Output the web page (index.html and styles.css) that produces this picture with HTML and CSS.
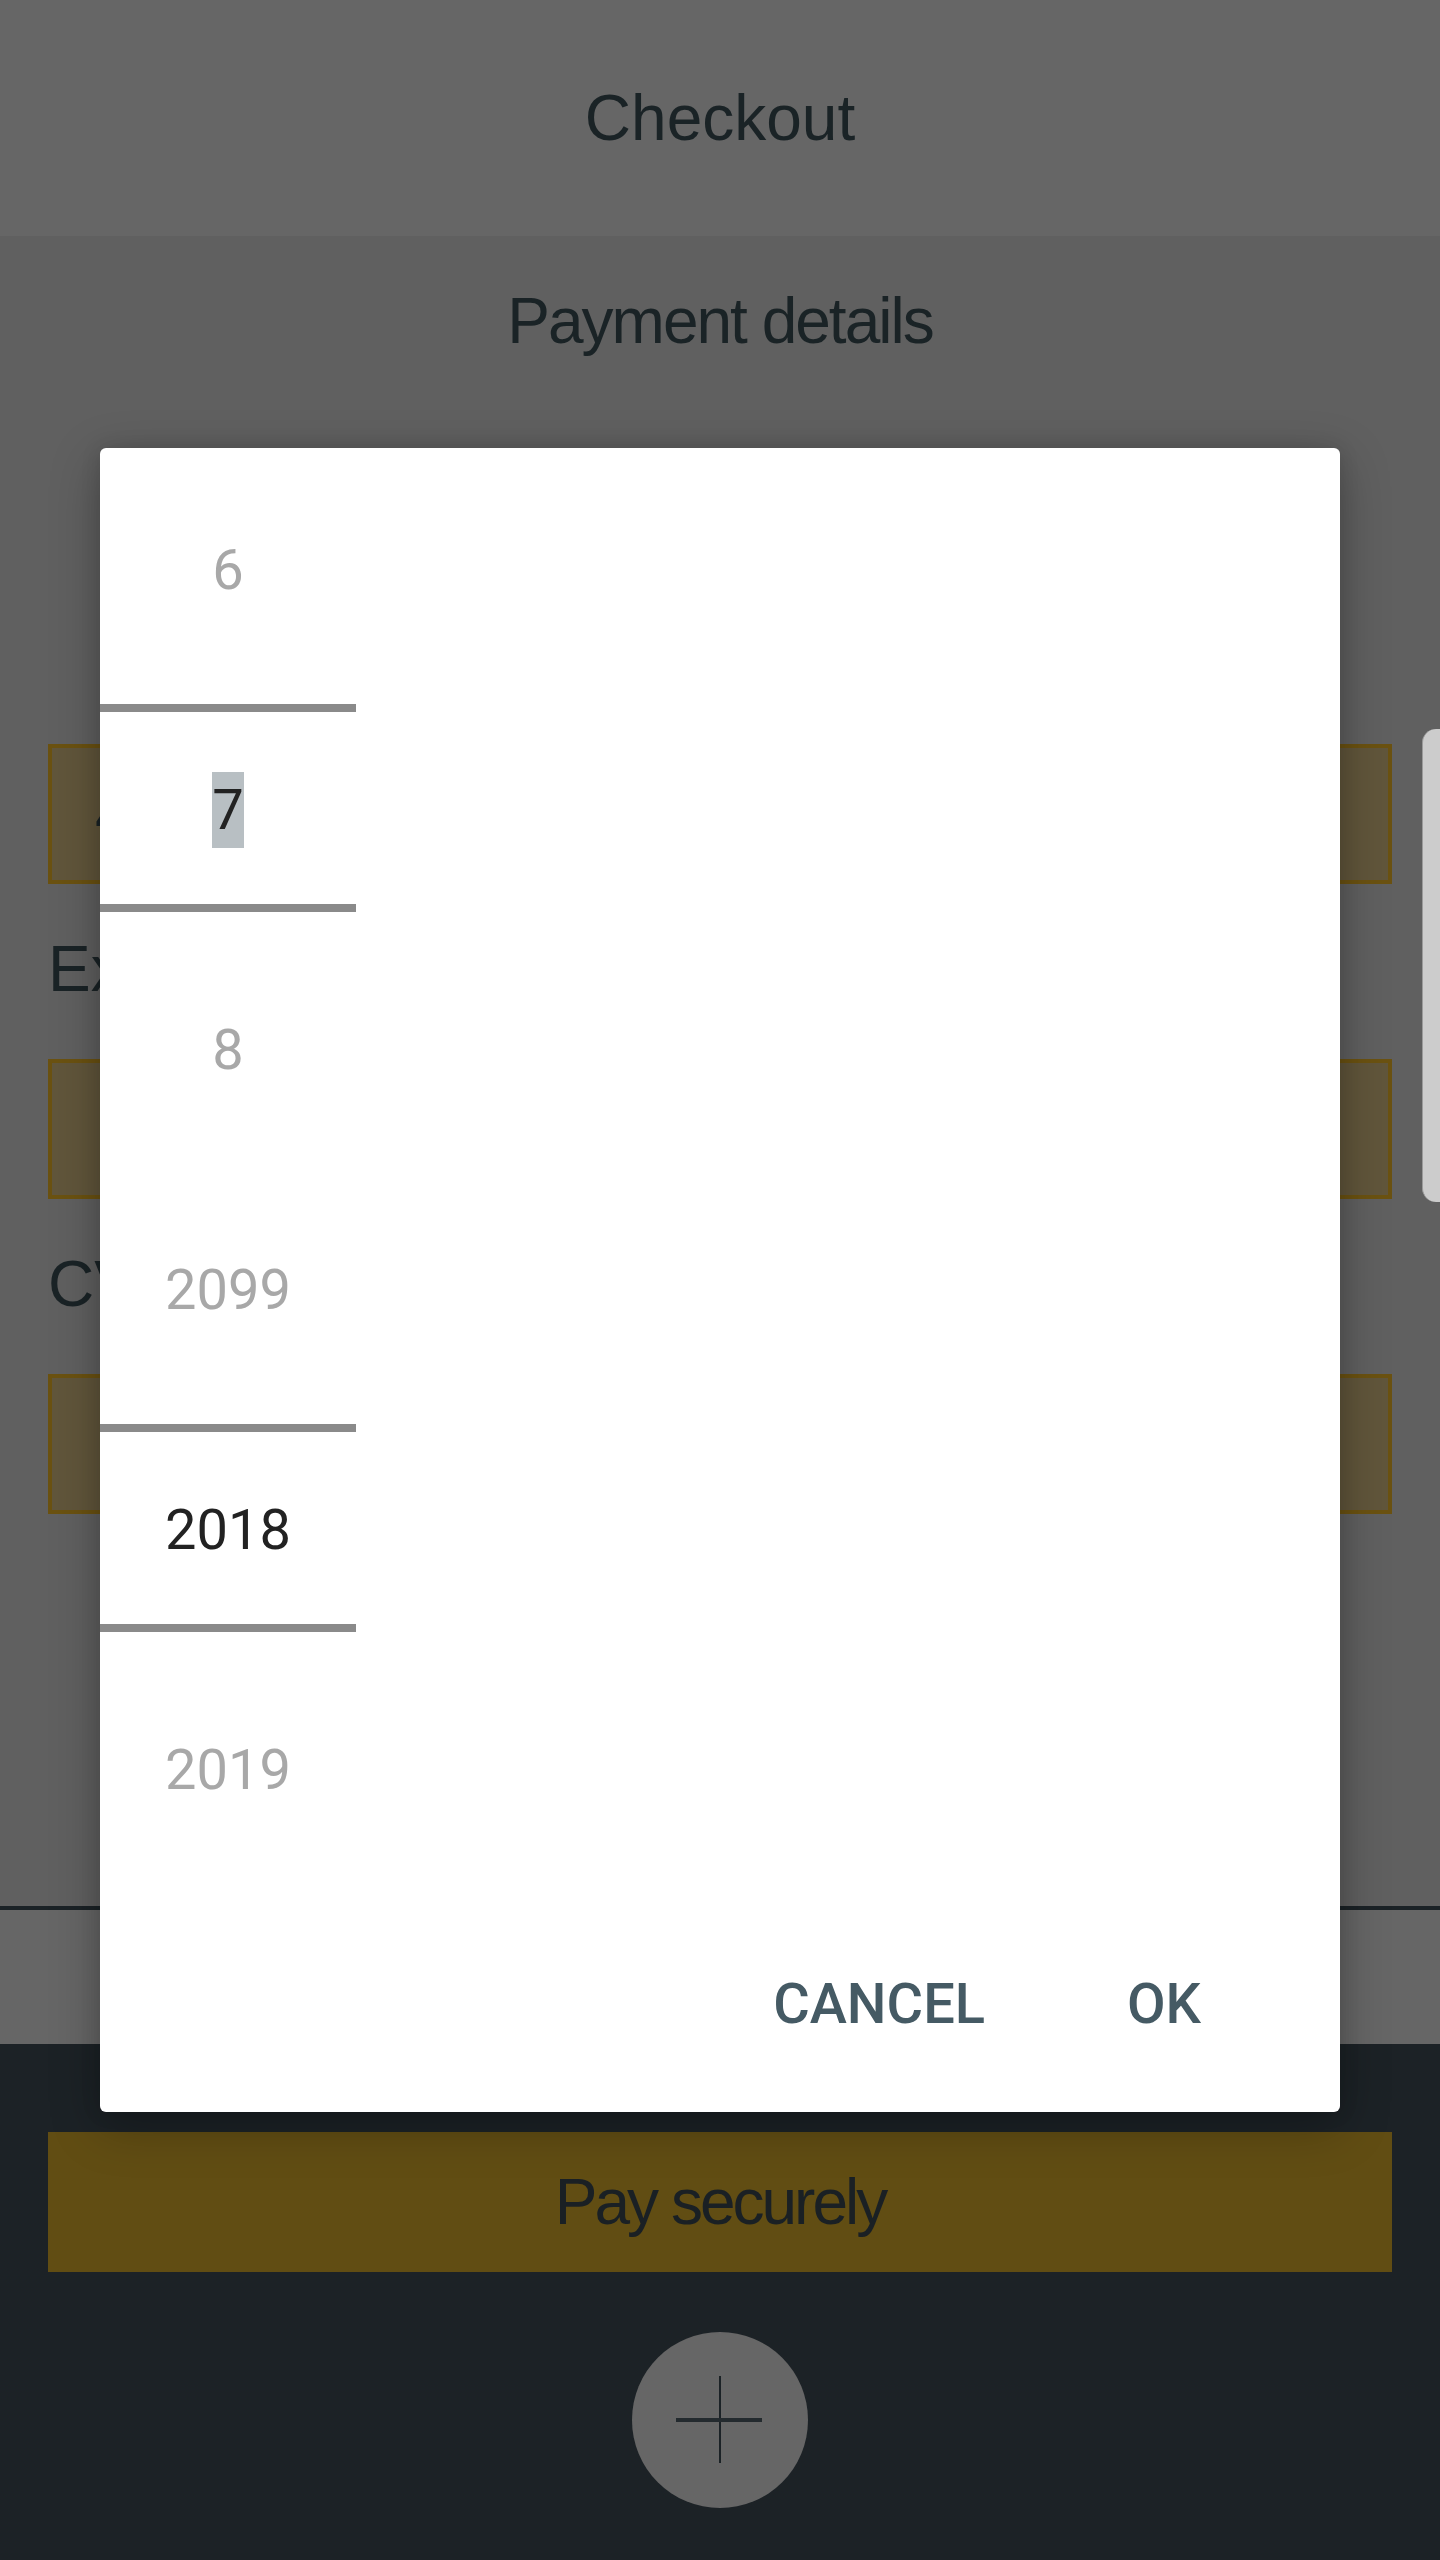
FILE: index.html
```html
<!DOCTYPE html>
<html lang="en">
<head>
<meta charset="utf-8">
<title>Checkout</title>
<link rel="stylesheet" href="styles.css">
</head>
<body>
<div class="screen">
  <header class="appbar"><h1 class="appbar-title">Checkout</h1></header>
  <main class="content">
    <h2 class="section-title">Payment details</h2>
    <form class="form">
      <label class="label label-center">Card number</label>
      <div class="field">4242 4242 4242 4242</div>
      <label class="label">Expiry date</label>
      <div class="field"></div>
      <label class="label">CVV</label>
      <div class="field"></div>
    </form>
  </main>
  <div class="summary"></div>
  <footer class="footer">
    <button class="pay" type="button">Pay securely</button>
    <button class="fab" type="button" aria-label="Add">
      <svg width="176" height="176" viewBox="0 0 176 176">
        <rect x="87" y="44" width="2" height="87" fill="#1b2226"/>
        <rect x="44" y="86" width="86" height="4" fill="#232a2e"/>
      </svg>
    </button>
  </footer>
  <div class="edge-handle"></div>

  <div class="dialog" role="dialog">
    <div class="picker-col">
      <div class="picker">
        <div class="picker-item">6</div>
        <div class="picker-item selected"><span class="sel">7</span></div>
        <div class="picker-item">8</div>
      </div>
      <div class="picker">
        <div class="picker-item">2099</div>
        <div class="picker-item selected">2018</div>
        <div class="picker-item">2019</div>
      </div>
    </div>
    <div class="actions">
      <button class="action" type="button">CANCEL</button>
      <button class="action" type="button">OK</button>
    </div>
  </div>
</div>
</body>
</html>
```

FILE: styles.css
```css
html, body {
  margin: 0;
  padding: 0;
}

body {
  background: #1c2226;
  font-family: "Liberation Sans", Arial, sans-serif;
}

.screen {
  position: relative;
  width: 1440px;
  height: 2560px;
  overflow: hidden;
}

.appbar {
  height: 236px;
  background: #666666;
  display: flex;
  justify-content: center;
}

.appbar-title {
  margin: 0;
  font-size: 64px;
  font-weight: 400;
  line-height: 236px;
  color: #1a2326;
}

.content {
  height: 1670px;
  box-sizing: border-box;
  background: #606060;
}

.section-title {
  margin: 0;
  text-align: center;
  font-size: 64px;
  font-weight: 400;
  line-height: 170px;
  letter-spacing: -2px;
  color: #1a2326;
}

.form {
  padding: 163px 48px 0 48px;
  display: flex;
  flex-direction: column;
}

.label {
  display: block;
  margin: 35px 0 40px;
  font-size: 64px;
  line-height: 100px;
  color: #1a2326;
}

.label-center {
  text-align: center;
}

.field {
  height: 140px;
  box-sizing: border-box;
  border: 4px solid #6b5211;
  background: #61563b;
  padding-left: 43px;
  font-size: 64px;
  line-height: 132px;
  color: #1a2326;
}

.summary {
  height: 134px;
  background: #666666;
  border-top: 4px solid #1b2226;
}

.footer {
  height: 516px;
  box-sizing: border-box;
  padding: 88px 48px 0;
  background: #1c2226;
  display: flex;
  flex-direction: column;
  align-items: center;
}

.pay {
  width: 100%;
  height: 140px;
  border: 0;
  background: #614d13;
  font-family: "Liberation Sans", Arial, sans-serif;
  font-size: 64px;
  letter-spacing: -3px;
  color: #1a2024;
  padding: 0;
}

.fab {
  margin-top: 60px;
  width: 176px;
  height: 176px;
  border-radius: 50%;
  border: 0;
  padding: 0;
  background: #666666;
  display: block;
}

.fab svg {
  display: block;
}

.edge-handle {
  position: absolute;
  right: 0;
  top: 729px;
  width: 17px;
  height: 473px;
  background: #cccccc;
  border-left: 1px solid #9a9a9a;
  border-radius: 14px 0 0 14px;
}

.dialog {
  position: absolute;
  left: 100px;
  top: 448px;
  width: 1240px;
  height: 1664px;
  background: #ffffff;
  border-radius: 6px;
  box-shadow: 0 14px 50px rgba(0, 0, 0, 0.28), 0 0 20px rgba(0, 0, 0, 0.12);
  display: flex;
  flex-direction: column;
}

.picker-col {
  width: 256px;
  padding-top: 2px;
}

.picker {
  position: relative;
  height: 720px;
}

.picker::after {
  content: "";
  position: absolute;
  left: 0;
  right: 0;
  top: 254px;
  height: 208px;
  box-sizing: border-box;
  border-top: 8px solid #8a8a8a;
  border-bottom: 8px solid #8a8a8a;
}

.picker-item {
  height: 240px;
  line-height: 240px;
  text-align: center;
  font-family: Roboto, "Liberation Sans", sans-serif;
  font-size: 56px;
  color: #a8a8a8;
}

.picker-item.selected {
  color: #222222;
}

.sel {
  display: inline-block;
  height: 76px;
  line-height: 76px;
  background: #b8bfc3;
}

.actions {
  margin-top: auto;
  display: flex;
  justify-content: flex-end;
  gap: 142px;
  padding: 0 139px 68px 0;
}

.action {
  border: 0;
  background: none;
  padding: 0;
  font-family: Roboto, "Liberation Sans", sans-serif;
  font-weight: 500;
  font-size: 56px;
  line-height: 80px;
  color: #455a64;
}
```
